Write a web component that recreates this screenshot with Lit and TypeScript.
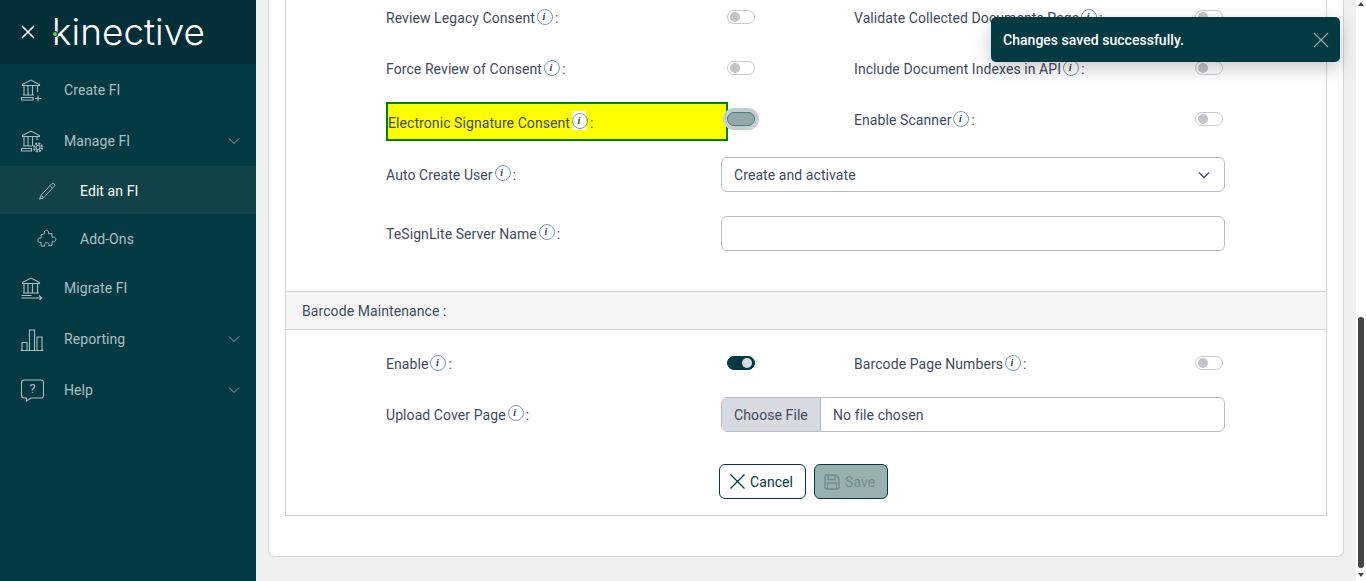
import { LitElement, html, css, svg } from "lit";
import { customElement } from "lit/decorators.js";

const icons: Record<string, unknown> = {
  create: html`<svg class="ic" viewBox="0 0 24 24">${svg`<path d="M2.500 6.500 11 2l8.500 4.500v1h-17zM4 8v9M8 8v9M12.500 8v9M17.500 8v6M3 17h11M1.500 19.500h11.500v2.500H1.500zM18 17.500v6M15 20.500h6.500" />`}</svg>`,
  manage: html`<svg class="ic" viewBox="0 0 24 24">${svg`<path d="M2.500 6.500 11 2l8.500 4.500v1h-17zM4 8v9M8 8v9M12.500 8v9M17 8v3M3 17h9M1.500 19.500h10v2.500h-10z" /><circle cx="18" cy="18.500" r="2" /><circle cx="18" cy="18.500" r="4" stroke-dasharray="2 1.100" stroke-width="2" />`}</svg>`,
  migrate: html`<svg class="ic" viewBox="0 0 24 24">${svg`<path d="M2.500 6.500 11 2l8.500 4.500v1h-17zM4 8v9M8 8v9M12.500 8v9M17.500 8v9M3 17h16M1.500 19.500h10M1.500 22h20M19 19.500l2.700 2.500-2.700 2.500" />`}</svg>`,
  report: html`<svg class="ic" viewBox="0 0 24 24">${svg`<path d="M.5 23.500h23M2 23V15.500h5V23M9.500 23V3h5v20M17 23V10h5v13" />`}</svg>`,
  help: html`<svg class="ic" viewBox="0 0 24 24">${svg`<path d="M4 2h17a2.500 2.500 0 0 1 2.500 2.500v13A2.500 2.500 0 0 1 21 20H11l-4.500 3v-3H4a2.500 2.500 0 0 1-2.500-2.500v-13A2.500 2.500 0 0 1 4 2z" />`}<text x="12.500" y="15" text-anchor="middle" class="q">?</text></svg>`,
  pencil: html`<svg class="ic sub" viewBox="0 0 24 24">${svg`<path d="M5 17 17.500 3.500a2 2 0 0 1 3 0 2 2 0 0 1 0 3L8 20l-5 2zM15.500 5.500l3 3M5 17l3 3" />`}</svg>`,
  puzzle: html`<svg class="ic sub" viewBox="0 0 24 24">${svg`<path d="M9 5.500c-1-3 1-4 2.500-4s3 1.500 2 4H18v4.500c3-1 4.500.5 4.500 2.500s-2 3.500-4.500 2.500V20h-4c.8-2.500-.5-3.500-2.500-3.500S8.500 18 9.500 20.500H5v-4.500c-3 .8-4-.8-4-2.500S2.500 10 5 11V7z" />`}</svg>`,
};

const chevron = html`<svg class="chev" viewBox="0 0 12 8"><path d="M1 1.500 6 6.500l5-5" /></svg>`;
const info = html`<span class="info"><i>i</i></span>`;

@customElement("app-root")
export class AppRoot extends LitElement {
  static styles = css`
    :host { display: flex; width: 1366px; height: 581px; overflow: hidden; position: relative; font-family: Roboto, "Liberation Sans", sans-serif; font-size: 14px; letter-spacing: .08px; color: #3f4b5e; background: #f0f0f0; }
    * { box-sizing: border-box; }
    .side { width: 256px; flex: none; background: #033a42; display: flex; flex-direction: column; }
    .brand { height: 64px; background: #022e37; display: flex; align-items: center; padding-left: 21px; flex: none; }
    .brand svg { width: 14px; height: 14px; stroke: #fff; stroke-width: 1.600; fill: none; flex: none; }
    .logo { position: relative; margin-left: 17px; color: #fff; font-family: Inter, sans-serif; font-weight: 300; font-size: 37px; letter-spacing: 0; line-height: 40px; }
    .dot { position: absolute; left: 1px; top: 20px; width: 4px; height: 4px; border-radius: 50%; background: #5fd14f; box-shadow: 0 0 0 1px #022e37; }
    .item { height: 51px; display: flex; align-items: center; padding-left: 20px; color: #a9c0c3; flex: none; position: relative; }
    .item .ic { width: 24px; height: 24px; margin-right: 20px; }
    .ic { fill: none; stroke: #a9bdc0; stroke-width: 1.100; flex: none; }
    .q { fill: #a9bdc0; stroke: none; font-size: 13px; font-family: Roboto, sans-serif; }
    .item.sub { height: 48px; padding: 1px 0 0 37px; }
    .item.sub .ic { width: 20px; height: 20px; margin-right: 23px; }
    .item.active { background: #114247; color: #fff; }
    .chev { width: 12px; height: 8px; fill: none; stroke: #8aa5a9; stroke-width: 1; margin-left: auto; margin-right: 16px; }
    .main { flex: 1; padding: 0 12px 24px; min-width: 0; display: flex; }
    .card { flex: 1; background: #fff; border: 1px solid #d2d3d4; border-top: 0; border-radius: 0 0 7px 7px; padding: 0 16px 40px; }
    .box { height: 516px; border: 1px solid #d2d3d4; border-top: 0; display: flex; flex-direction: column; }
    .form { padding-left: 100px; }
    .row { display: flex; align-items: center; height: 36px; margin-bottom: 15px; }
    .row.r3 { height: 39px; margin-bottom: 16px; }
    .r3 .label.right { height: 36px; margin-bottom: 3px; }
    .r3 .sw.end { margin-top: -5px; }
    .row.tall { height: 35px; margin-bottom: 24px; }
    .row.last { margin-bottom: 0; }
    .row.file { margin-bottom: 0; margin-top: 15px; }
    .label { width: 335px; flex: none; white-space: nowrap; display: flex; align-items: center; height: 100%; }
    .label.right { width: 341px; }
    .hl { width: 342px; height: 39px; background: #ff0; border: 2px solid #008000; margin-right: -7px; padding-top: 2px; }
    .hl .info { background: #fff; }
    .info { display: inline-flex; align-items: center; justify-content: center; width: 14px; height: 19px; margin: 0 4px 4px 2px; position: relative; }
    .info::before { content: ""; position: absolute; left: 0; top: 2px; width: 14px; height: 14px; border-radius: 50%; border: 1px solid #7d9bac; }
    .info i { font: italic 700 10px "Liberation Serif", serif; color: #33424f; }
    .sw { width: 28px; height: 14px; border-radius: 7px; border: 1px solid #c9c9cc; background: #fff; margin: -2px 99px 0 6px; flex: none; display: flex; align-items: center; padding: 0 2px; }
    .sw::before { content: ""; width: 10px; height: 10px; border-radius: 50%; background: #c4c4c9; }
    .sw.end { margin: -2px 0 0 0; }
    .sw.on { background: #033a42; border-color: #033a42; justify-content: flex-end; }
    .sw.on::before { background: #d5dede; }
    .sw.focus { background: #94a8a9; border-color: #4f7a7c; box-shadow: 0 0 0 4px #c0cfd0; margin-top: -6px; position: relative; z-index: 1; }
    .sw.focus::before { display: none; }
    .field { width: 504px; height: 35px; border: 1px solid #b9bcc5; border-radius: 6px; background: #fff; display: flex; align-items: center; flex: none; overflow: hidden; }
    .select { padding-left: 12px; }
    .select .chev { stroke: #3f4b5e; stroke-width: 1.300; margin-right: 14px; }
    .choose { width: 99px; height: 100%; background: #d7dae0; border-right: 1px solid #b9bcc5; display: flex; align-items: center; justify-content: center; flex: none; }
    .nofile { padding-left: 12px; }
    .section { height: 39px; margin-top: 40px; background: #f6f6f6; border-top: 1px solid #d2d3d4; border-bottom: 1px solid #d2d3d4; display: flex; align-items: center; padding-left: 16px; flex: none; }
    .barcode { padding-top: 16px; }
    .actions { display: flex; gap: 8px; padding: 32px 0 0 433px; }
    .btn { height: 35px; border: 1px solid #033a42; border-radius: 6px; display: flex; align-items: center; color: #033a42; background: #fff; font-family: inherit; font-size: 14px; letter-spacing: inherit; }
    .btn svg { fill: none; stroke: currentColor; flex: none; }
    .cancel { width: 87px; padding-left: 9px; gap: 4px; }
    .save { width: 74px; padding-left: 9px; gap: 5px; background: #9aafb0; color: #6f8c8e; }
    .scroll { width: 10px; flex: none; background: #fff; position: relative; display: flex; flex-direction: column; align-items: center; }
    .thumb { position: absolute; left: 2px; top: 317px; width: 6px; height: 251px; border-radius: 3px; background: #434343; }
    .up, .down { position: absolute; left: 2px; width: 0; height: 0; border-left: 3px solid transparent; border-right: 3px solid transparent; }
    .up { top: 2px; border-bottom: 4px solid #434343; }
    .down { top: 573px; border-top: 4px solid #434343; }
    .toast { position: absolute; left: 991px; top: 17px; width: 349px; height: 45px; border-radius: 5px; background: #033a42; color: #fff; font-weight: 500; letter-spacing: .03px; display: flex; align-items: center; padding: 0 11px 0 12px; box-shadow: 0 6px 18px rgba(0,0,0,.22); }
    .toast svg { width: 16px; height: 16px; margin-left: auto; stroke: #8aa5a9; stroke-width: 1.300; fill: none; }
  `;

  private row(l: string, r: string, cls = "") {
    return html`<div class="row">
      <span class="label">${l}${info}:</span>
      <span class="sw ${cls}"></span>
      <span class="label right">${r}${info}:</span>
      <span class="sw end"></span>
    </div>`;
  }

  render() {
    return html`
      <nav class="side">
        <div class="brand">
          <svg viewBox="0 0 14 14"><path d="M1 1l12 12M13 1 1 13" /></svg>
          <div class="logo">kinective<span class="dot"></span></div>
        </div>
        <div class="item">${icons.create}Create FI</div>
        <div class="item">${icons.manage}Manage FI${chevron}</div>
        <div class="item sub active">${icons.pencil}Edit an FI</div>
        <div class="item sub">${icons.puzzle}Add-Ons</div>
        <div class="item">${icons.migrate}Migrate FI</div>
        <div class="item">${icons.report}Reporting${chevron}</div>
        <div class="item">${icons.help}Help${chevron}</div>
      </nav>
      <main class="main">
        <div class="card">
          <div class="box">
            <div class="form">
              ${this.row("Review Legacy Consent", "Validate Collected Documents Page")}
              ${this.row("Force Review of Consent", "Include Document Indexes in API")}
              <div class="row r3">
                <span class="label hl">Electronic Signature Consent${info}:</span>
                <span class="sw focus"></span>
                <span class="label right">Enable Scanner${info}:</span>
                <span class="sw end"></span>
              </div>
              <div class="row tall">
                <span class="label">Auto Create User${info}:</span>
                <div class="field select">Create and activate${chevron}</div>
              </div>
              <div class="row tall last">
                <span class="label">TeSignLite Server Name${info}:</span>
                <div class="field"></div>
              </div>
            </div>
            <div class="section">Barcode Maintenance :</div>
            <div class="form barcode">
              ${this.row("Enable", "Barcode Page Numbers", "on")}
              <div class="row tall file">
                <span class="label">Upload Cover Page${info}:</span>
                <div class="field"><span class="choose">Choose File</span><span class="nofile">No file chosen</span></div>
              </div>
            </div>
            <div class="actions">
              <button class="btn cancel"><svg width="17" height="17" viewBox="0 0 17 17"><path d="M1.500 1.500l14 14M15.500 1.500l-14 14" stroke-width="1.300" /></svg>Cancel</button>
              <button class="btn save"><svg width="16" height="16" viewBox="0 0 16 16"><path d="M1 2.500A1.500 1.500 0 0 1 2.500 1H12l3 3v9.500a1.500 1.500 0 0 1-1.500 1.500h-11A1.500 1.500 0 0 1 1 13.500zM4 1v4.500h7V1M3.500 15V9h9v6" stroke-width="1.300" /></svg>Save</button>
            </div>
          </div>
        </div>
      </main>
      <div class="scroll"><span class="up"></span><span class="thumb"></span><span class="down"></span></div>
      <div class="toast">Changes saved successfully.<svg viewBox="0 0 16 16"><path d="M1 1l14 14M15 1 1 15" /></svg></div>
    `;
  }
}
